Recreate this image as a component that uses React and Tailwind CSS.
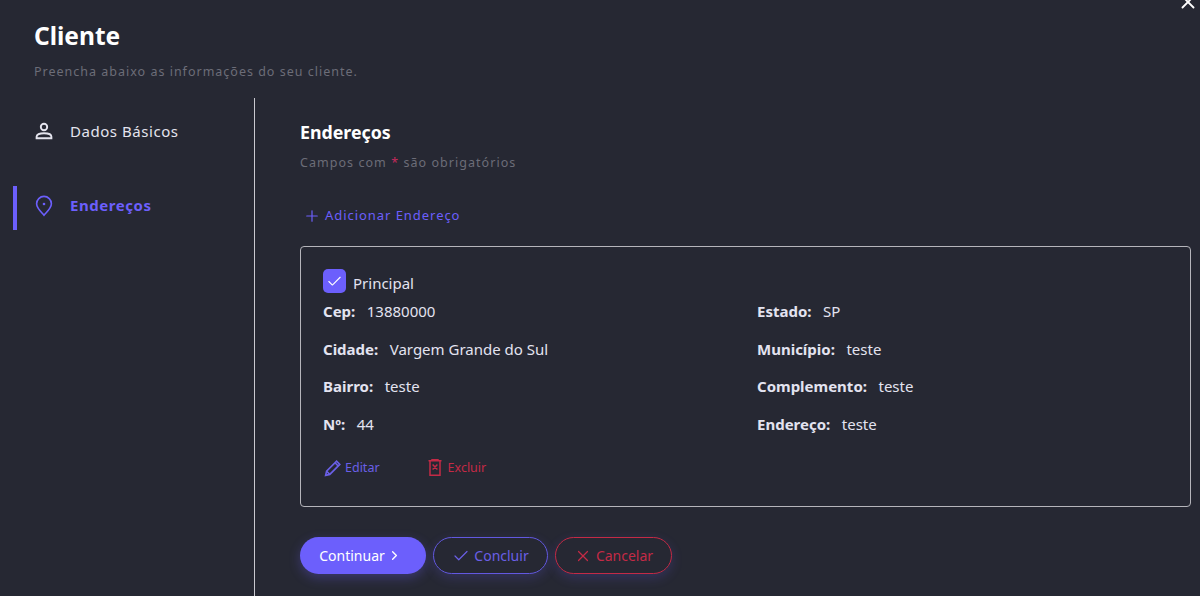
import React from "react";
import { Check, ChevronRight, Plus, X } from "lucide-react";

const font = "font-['Noto_Sans',sans-serif]";

const leftFields = [
  ["Cep:", "13880000"],
  ["Cidade:", "Vargem Grande do Sul"],
  ["Bairro:", "teste"],
  ["Nº:", "44"],
];

const rightFields = [
  ["Estado:", "SP"],
  ["Município:", "teste"],
  ["Complemento:", "teste"],
  ["Endereço:", "teste"],
];

const UserIcon = () => (
  <svg width="20" height="20" viewBox="0 0 20 20" fill="none" stroke="#e4e4ee" strokeWidth="1.9">
    <circle cx="10" cy="6" r="3.2" />
    <path d="M2.6 17.2v-1.5c0-2 2.6-3.5 7.4-3.5s7.4 1.5 7.4 3.5v1.5z" />
  </svg>
);

const PinIcon = () => (
  <svg width="20" height="22" viewBox="0 0 20 22" fill="none" stroke="#6c5ffc" strokeWidth="1.6">
    <path d="M10 20.2c-1.2-1.7-7.4-6.6-7.4-11.4a7.4 7.4 0 0 1 14.8 0c0 4.8-6.2 9.7-7.4 11.4z" />
    <circle cx="10" cy="9" r="1.3" fill="#6c5ffc" stroke="none" />
  </svg>
);

const PencilIcon = () => (
  <svg className="-mt-[2px]" width="18" height="18" viewBox="0 0 18 18" fill="none" stroke="#6a5fe6" strokeWidth="1.6">
    <path d="M1.6 16.4l1-4.2L12.6 2.2l3.2 3.2-10 10z" />
    <path d="M11 3.8l3.2 3.2M2.6 12.2l3.2 3.2" />
  </svg>
);

const TrashIcon = () => (
  <svg className="-mt-[3px]" width="14" height="17" viewBox="0 0 14 17" fill="none" stroke="#c42a46" strokeWidth="1.5">
    <path d="M0.5 1.8h13M4 1.8V0.8h6v1M2 1.8v14.4h10V1.8M4.6 5.6l4.8 5M9.4 5.6l-4.8 5" />
  </svg>
);

const Field = ({ label, value }) => (
  <div className="h-[37.7px] flex gap-[11.5px] text-[15px] leading-[20px] text-[#e3e3f0]">
    <span className="font-bold">{label}</span>
    <span>{value}</span>
  </div>
);

const App = () => {
  return (
    <div className={`${font} relative w-[1200px] h-[596px] overflow-hidden bg-[#262833] flex flex-col`}>
      <X className="absolute right-[1px] top-[-9px] text-white" size={22} strokeWidth={2} />

      {/* Header */}
      <div className="h-[98px] pl-[34px] pt-[19px]">
        <h1 className="text-[24.5px] leading-[34px] font-bold text-white">Cliente</h1>
        <p className="mt-[10px] text-[12.5px] leading-[18px] tracking-[1px] text-[#6c6d78]">
          Preencha abaixo as informações do seu cliente.
        </p>
      </div>

      <div className="flex flex-1">
        {/* Left Menu */}
        <div className="w-[255px] border-r border-[#c9c9d0] pt-[21px]">
          <div className="h-[24px] pl-[34px] flex items-center gap-[16px] text-[15px] tracking-[0.55px] text-[#e4e4ee]">
            <UserIcon />
            <span>Dados Básicos</span>
          </div>
          <div className="mt-[43px] h-[44px] ml-[13px] pl-[17px] pb-[5px] border-l-4 border-[#6c5ffc] flex items-center gap-[16px] text-[15px] font-bold tracking-[0.55px] text-[#6c5ffc]">
            <PinIcon />
            <span>Endereços</span>
          </div>
        </div>

        {/* Right Content */}
        <div className="flex-1 pl-[45px] pr-[9px] pt-[22px]">
          <h2 className="text-[17.8px] leading-[24px] font-bold text-white">Endereços</h2>
          <p className="mt-[10px] text-[12.5px] leading-[18px] tracking-[1.05px] text-[#6c6d78]">
            Campos com <span className="text-[#c42a5c]">*</span> são obrigatórios
          </p>

          <div className="mt-[34px] ml-[3px] h-[20px] flex items-center gap-[4px] text-[13px] tracking-[0.95px] text-[#6c5ffc]">
            <Plus size={18} strokeWidth={1.6} />
            <span>Adicionar Endereço</span>
          </div>

          {/* Address Card */}
          <div className="mt-[20px] h-[261px] rounded-[4px] border border-[#b5b5bb] pl-[22px] pt-[22px]">
            <div className="h-[24px] flex items-center gap-[7px] text-[15px] text-[#e3e3f0]">
              <span className="w-[23px] h-[24px] rounded-[5px] bg-[#6c5ffc] flex items-center justify-center">
                <Check size={17} strokeWidth={1.5} className="text-white" />
              </span>
              <span className="pt-[4px]">Principal</span>
            </div>
            <div className="mt-[8px] flex">
              <div className="w-[434px]">
                {leftFields.map(([label, value]) => (
                  <Field key={label} label={label} value={value} />
                ))}
              </div>
              <div>
                {rightFields.map(([label, value]) => (
                  <Field key={label} label={label} value={value} />
                ))}
              </div>
            </div>
            <div className="mt-[7px] ml-[1px] h-[20px] flex items-center text-[12.5px]">
              <span className="flex items-center gap-[3px] text-[#6a5fe6]">
                <PencilIcon />
                Editar
              </span>
              <span className="ml-[48px] flex items-center gap-[6px] text-[#c42a46]">
                <TrashIcon />
                Excluir
              </span>
            </div>
          </div>

          {/* Buttons */}
          <div className="mt-[30px] flex gap-[7px] text-[14px]">
            <button className="w-[126px] h-[37px] pr-[5px] rounded-full bg-[#6c5ffc] text-white flex items-center justify-center gap-[2px] shadow-[0_4px_12px_rgba(108,95,252,0.3)]">
              Continuar
              <ChevronRight size={15} strokeWidth={2.2} />
            </button>
            <button className="w-[115px] h-[37px] rounded-full border border-[#6258e0] text-[#6a5fe6] flex items-center justify-center gap-[4px] shadow-[0_4px_12px_rgba(108,95,252,0.2)]">
              <Check size={18} strokeWidth={1.6} />
              Concluir
            </button>
            <button className="w-[117px] h-[37px] rounded-full border border-[#c42a46] text-[#c42a46] flex items-center justify-center gap-[4px] shadow-[0_4px_12px_rgba(108,95,252,0.2)]">
              <X size={18} strokeWidth={1.6} />
              Cancelar
            </button>
          </div>
        </div>
      </div>
    </div>
  );
};

export default App;
